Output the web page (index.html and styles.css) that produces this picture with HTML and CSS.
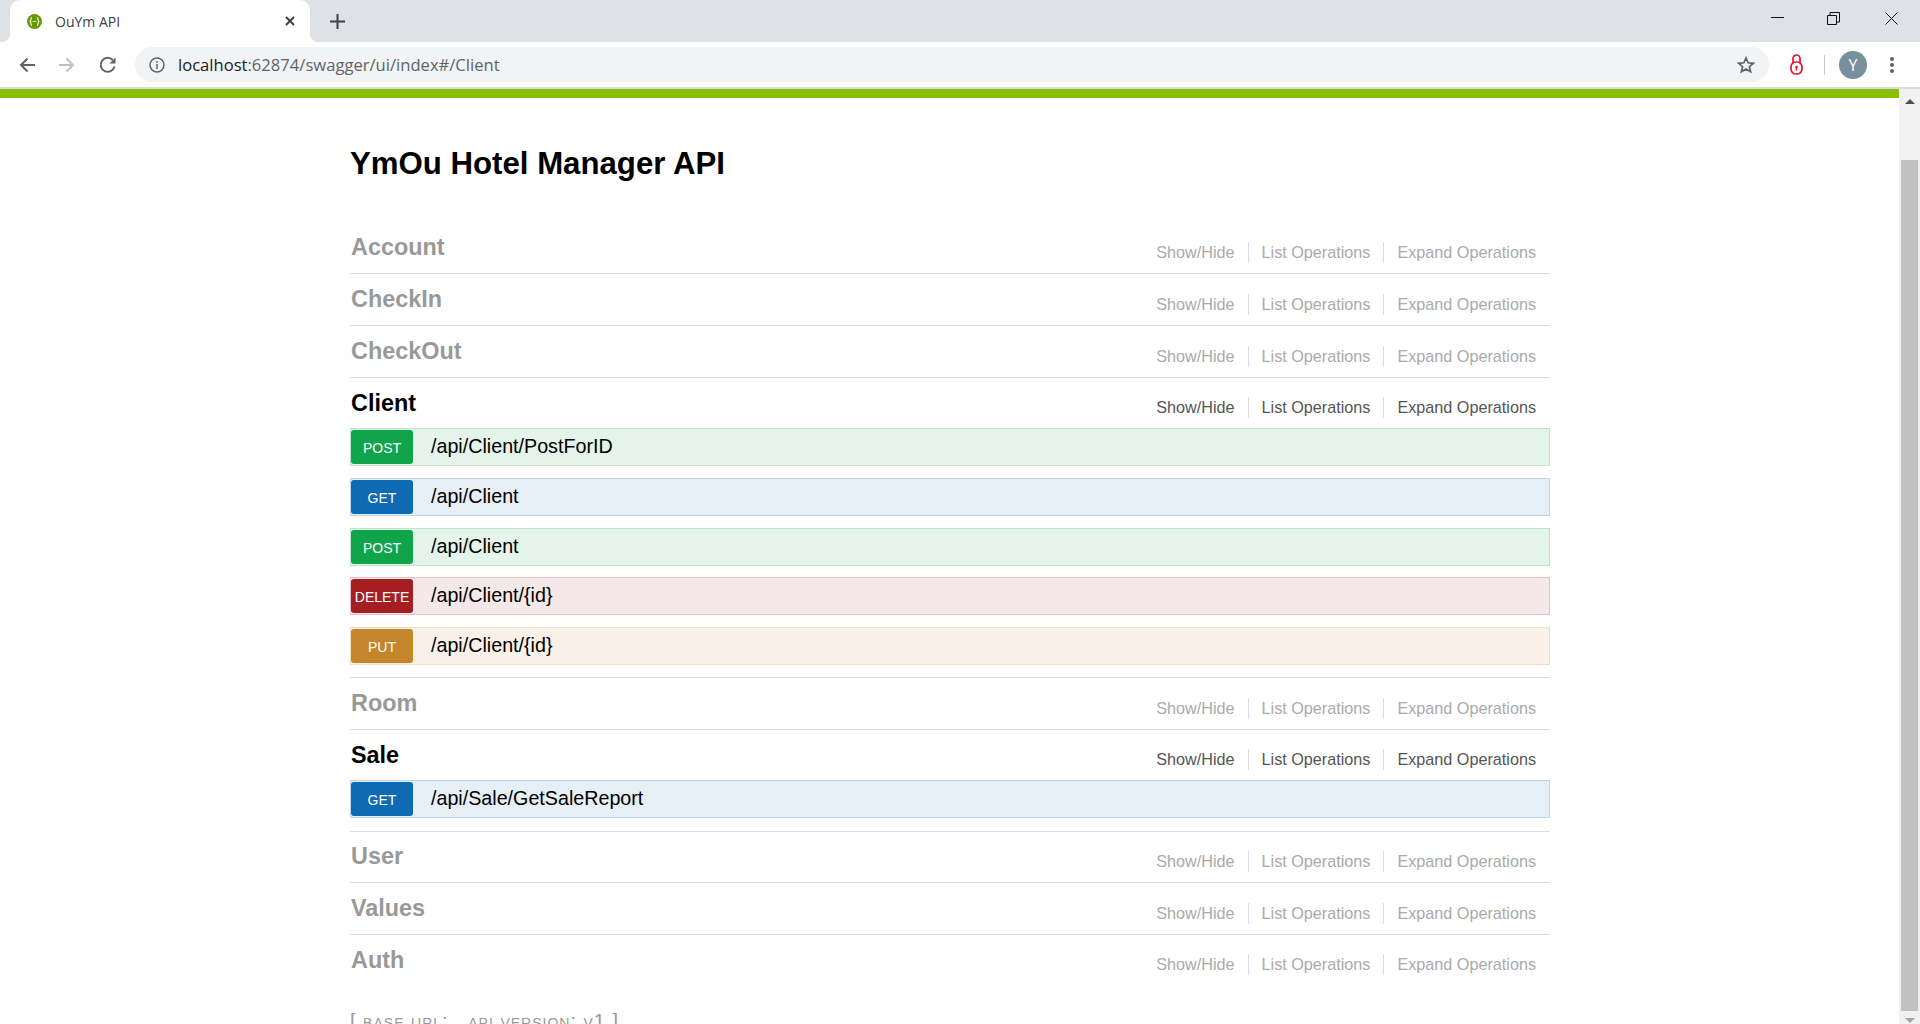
FILE: index.html
```html
<!DOCTYPE html>
<html lang="en">
  <head>
    <meta charset="UTF-8" />
    <title>OuYm API</title>
    <link rel="stylesheet" href="styles.css">
  </head>
  <body>
    <div class="tabstrip">
      <div class="tab">
        <svg class="favicon" width="15" height="15" viewBox="0 0 14 14">
          <circle cx="7" cy="7" r="7" fill="#659a00" />
          <path d="M4.600 3.200c-1.300 0-.5 3.200-1.600 3.800 1.100.6.3 3.800 1.600 3.800M9.400 3.200c1.300 0 .5 3.200 1.600 3.800-1.100.6-.3 3.800-1.600 3.800" fill="none" stroke="#fff" stroke-width="1" />
          <path d="M5.300 7h.9M6.600 7h.8M7.800 7h.9" stroke="#fff" stroke-width="1" />
        </svg>
        <span class="tab-title">OuYm API</span>
        <svg class="tab-close" width="10" height="10" viewBox="0 0 10 10">
          <path d="M1 1l8 8M9 1l-8 8" stroke="#3c4043" stroke-width="2" />
        </svg>
      </div>
      <svg class="new-tab" width="15" height="15" viewBox="0 0 15 15">
        <path d="M7.500 0v15M0 7.500h15" stroke="#3c4043" stroke-width="2" />
      </svg>
      <div class="win-controls">
        <svg width="13" height="13" viewBox="0 0 13 13"><path d="M0 5.500h13" stroke="#111" /></svg>
        <svg width="13" height="13" viewBox="0 0 13 13" fill="none" stroke="#111"><path d="M.5 3.500h9v9h-9zM3 3.500V.5h9.500v9.500h-3" /></svg>
        <svg class="win-close" width="13" height="13" viewBox="0 0 13 13"><path d="M.5.5l12 12M12.500.5l-12 12" stroke="#111" /></svg>
      </div>
    </div>

    <div class="toolbar">
      <svg class="nav-btn" width="16" height="16" viewBox="0 0 16 16" fill="none" stroke="#5f6368" stroke-width="2">
        <path d="M16 8H2M8.500 1.500L2 8l6.500 6.500" />
      </svg>
      <svg class="nav-btn" width="16" height="16" viewBox="0 0 16 16" fill="none" stroke="#bdc1c6" stroke-width="2">
        <path d="M0 8h14M7.500 1.500L14 8l-6.500 6.500" />
      </svg>
      <svg class="nav-btn reload" width="18" height="18" viewBox="0 0 18 18" fill="none" stroke="#5f6368" stroke-width="2">
        <path d="M15.500 10.500A7 7 0 1 1 13.800 4" />
        <path d="M16.500 1.500v6h-6z" fill="#5f6368" stroke="none" />
      </svg>
      <div class="omnibox">
        <svg class="info-icon" width="16" height="16" viewBox="0 0 16 16" fill="none" stroke="#5f6368" stroke-width="1.500">
          <circle cx="8" cy="8" r="7" />
          <path d="M8 7v5M8 4v1.700" />
        </svg>
        <span class="url"><span class="url-host">localhost</span>:62874/swagger/ui/index#/Client</span>
        <svg class="star" width="18" height="18" viewBox="0 0 18 18" fill="none" stroke="#5f6368" stroke-width="1.700">
          <path d="M9 2l2.100 4.800 5.200.5-3.900 3.400 1.200 5.100L9 13.100l-4.600 2.700 1.200-5.100-3.900-3.400 5.200-.5z" />
        </svg>
      </div>
      <svg class="lock" width="13" height="21" viewBox="0 0 13 21" fill="none" stroke="#e8112d" stroke-width="1.700">
        <path d="M3 9V4.500a3.500 3.500 0 0 1 7 0V9" />
        <rect x="1" y="8" width="11" height="12" rx="5" />
        <circle cx="6.500" cy="13" r="1.300" fill="#e8112d" stroke="none" />
        <path d="M6.500 13v3.500" stroke-width="1.500" />
      </svg>
      <div class="toolbar-sep"></div>
      <div class="avatar">Y</div>
      <svg class="kebab" width="4" height="16" viewBox="0 0 4 16" fill="#5f6368">
        <circle cx="2" cy="2" r="2" /><circle cx="2" cy="8" r="2" /><circle cx="2" cy="14" r="2" />
      </svg>
    </div>

    <div class="viewport">
      <div class="page">
        <div class="green-bar"></div>
        <div class="container">
          <h1 class="api-title">YmOu Hotel Manager API</h1>

          <div class="resource">
            <div class="resource-head">
              <h2>Account</h2>
              <ul class="actions"><li>Show/Hide</li><li>List Operations</li><li>Expand Operations</li></ul>
            </div>
          </div>
          <div class="resource">
            <div class="resource-head">
              <h2>CheckIn</h2>
              <ul class="actions"><li>Show/Hide</li><li>List Operations</li><li>Expand Operations</li></ul>
            </div>
          </div>
          <div class="resource">
            <div class="resource-head">
              <h2>CheckOut</h2>
              <ul class="actions"><li>Show/Hide</li><li>List Operations</li><li>Expand Operations</li></ul>
            </div>
          </div>

          <div class="resource open">
            <div class="resource-head">
              <h2>Client</h2>
              <ul class="actions"><li>Show/Hide</li><li>List Operations</li><li>Expand Operations</li></ul>
            </div>
            <div class="operation post"><span class="method">POST</span><span class="path">/api/Client/PostForID</span></div>
            <div class="operation get"><span class="method">GET</span><span class="path">/api/Client</span></div>
            <div class="operation post"><span class="method">POST</span><span class="path">/api/Client</span></div>
            <div class="operation delete"><span class="method">DELETE</span><span class="path">/api/Client/{id}</span></div>
            <div class="operation put"><span class="method">PUT</span><span class="path">/api/Client/{id}</span></div>
          </div>

          <div class="resource">
            <div class="resource-head">
              <h2>Room</h2>
              <ul class="actions"><li>Show/Hide</li><li>List Operations</li><li>Expand Operations</li></ul>
            </div>
          </div>

          <div class="resource open">
            <div class="resource-head">
              <h2>Sale</h2>
              <ul class="actions"><li>Show/Hide</li><li>List Operations</li><li>Expand Operations</li></ul>
            </div>
            <div class="operation get"><span class="method">GET</span><span class="path">/api/Sale/GetSaleReport</span></div>
          </div>

          <div class="resource">
            <div class="resource-head">
              <h2>User</h2>
              <ul class="actions"><li>Show/Hide</li><li>List Operations</li><li>Expand Operations</li></ul>
            </div>
          </div>
          <div class="resource">
            <div class="resource-head">
              <h2>Values</h2>
              <ul class="actions"><li>Show/Hide</li><li>List Operations</li><li>Expand Operations</li></ul>
            </div>
          </div>
          <div class="resource last">
            <div class="resource-head">
              <h2>Auth</h2>
              <ul class="actions"><li>Show/Hide</li><li>List Operations</li><li>Expand Operations</li></ul>
            </div>
          </div>

          <p class="api-info">[ base url: &nbsp; api version: v1 ]</p>
        </div>
      </div>

      <div class="scrollbar">
        <div class="arrow arrow-up"></div>
        <div class="thumb"></div>
        <div class="arrow arrow-down"></div>
      </div>
    </div>
  </body>
</html>
```

FILE: styles.css
```css
* {
  box-sizing: border-box;
}

html,
body {
  margin: 0;
  padding: 0;
  height: 100%;
  overflow: hidden;
}

body {
  display: flex;
  flex-direction: column;
  font-family: "Liberation Sans", Arial, sans-serif;
  background-color: #fff;
}

/* browser chrome */
.tabstrip {
  flex: none;
  height: 42px;
  display: flex;
  align-items: center;
  padding: 0 22px 0 10px;
  background-color: #dee1e6;
}

.tab {
  position: relative;
  width: 300px;
  height: 42px;
  display: flex;
  align-items: center;
  padding: 0 15px 0 17px;
  background-color: #fff;
  border-radius: 10px 10px 0 0;
}

.tab::before,
.tab::after {
  content: "";
  position: absolute;
  bottom: 0;
  width: 9px;
  height: 9px;
}

.tab::before {
  left: -9px;
  background: radial-gradient(circle at 0 0, #dee1e6 9px, #fff 9.5px);
}

.tab::after {
  right: -9px;
  background: radial-gradient(circle at 100% 0, #dee1e6 9px, #fff 9.5px);
}

.favicon {
  flex: none;
}

.tab-title {
  flex: 1;
  margin-left: 13px;
  font-family: "Open Sans", sans-serif;
  font-size: 14px;
  color: #3c4043;
}

.new-tab {
  margin-left: 20px;
}

.win-controls {
  margin-left: auto;
  margin-top: -5px;
  display: flex;
  gap: 43px;
}

.win-close {
  margin-left: 2px;
}

.toolbar {
  flex: none;
  height: 47px;
  display: flex;
  align-items: center;
  padding: 0 26px 0 19px;
  background-color: #fff;
  border-bottom: 2px solid #dadce0;
}

.nav-btn {
  flex: none;
  margin-right: 24px;
}

.nav-btn.reload {
  margin-right: 18px;
}

.omnibox {
  flex: 1;
  height: 35px;
  display: flex;
  align-items: center;
  padding: 0 14px;
  background-color: #f1f3f4;
  border-radius: 18px;
}

.url {
  flex: 1;
  margin-left: 13px;
  font-family: "Open Sans", sans-serif;
  font-size: 16.6px;
  color: #5f6368;
}

.url-host {
  color: #202124;
}

.lock {
  flex: none;
  margin-left: 21px;
}

.toolbar-sep {
  width: 1px;
  height: 20px;
  margin: 0 14px 0 21px;
  background-color: #ccc;
}

.avatar {
  flex: none;
  width: 28px;
  height: 28px;
  display: flex;
  align-items: center;
  justify-content: center;
  border-radius: 50%;
  background-color: #78909c;
  color: #fff;
  font-family: "Open Sans", sans-serif;
  font-size: 16px;
}

.kebab {
  flex: none;
  margin-left: 23px;
}

/* page */
.viewport {
  flex: 1;
  min-height: 0;
  display: flex;
}

.page {
  flex: 1;
  min-width: 0;
  overflow: hidden;
}

.green-bar {
  height: 9px;
  background-color: #89bf04;
}

.container {
  width: 1200px;
  margin-left: 350px;
}

.api-title {
  margin: 0;
  padding-top: 48px;
  height: 124.6px;
  font-size: 31.2px;
  line-height: 36px;
  font-weight: bold;
  color: #000;
}

.resource {
  border-bottom: 1px solid #ddd;
  color: #999;
}

.resource.last {
  border-bottom: none;
}

.resource.open {
  color: #000;
  padding-bottom: 12.3px;
}

.resource-head {
  height: 50.8px;
  display: flex;
  align-items: center;
  justify-content: space-between;
}

.open .resource-head {
  height: 50.4px;
}

.resource-head h2 {
  margin: 0 0 0 1px;
  font-size: 23.4px;
  font-weight: bold;
}

.actions {
  display: flex;
  margin: 9px 1px 0 0;
  padding: 0;
  list-style: none;
  font-size: 16.2px;
  line-height: 21px;
  color: #aaa;
}

.actions li {
  padding: 0 13px;
  border-right: 1px solid #ddd;
}

.actions li:last-child {
  border-right: none;
}

.open .actions {
  color: #555;
}

.operation {
  height: 37.8px;
  display: flex;
  align-items: center;
  margin-bottom: 11.9px;
  padding: 1px 0;
  border: 1px solid;
  color: #000;
}

.operation:last-child {
  margin-bottom: 0;
}

.method {
  flex: none;
  width: 62px;
  height: 100%;
  display: flex;
  align-items: center;
  justify-content: center;
  border-radius: 3px;
  padding-top: 2px;
  color: #fff;
  font-size: 14px;
}

.path {
  margin-left: 18px;
  font-size: 19.7px;
  padding-bottom: 1px;
}

.post {
  background-color: #e4f4ea;
  border-color: #bde5cb;
}

.post .method {
  background-color: #10a54a;
}

.get {
  background-color: #e6eef6;
  border-color: #bcd5ec;
}

.get .method {
  background-color: #0f6ab4;
}

.delete {
  background-color: #f5e8e8;
  border-color: #e8c0c5;
}

.delete .method {
  background-color: #a41e22;
}

.put {
  background-color: #f9f1e7;
  border-color: #f0dcc4;
}

.put .method {
  background-color: #c5862b;
}

.api-info {
  margin: 24px 0 0;
  font-size: 20px;
  font-variant: small-caps;
  letter-spacing: 1px;
  color: #999;
}

/* scrollbar */
.scrollbar {
  flex: none;
  width: 21px;
  display: flex;
  flex-direction: column;
  align-items: center;
  background-color: #f1f1f1;
}

.arrow {
  flex: none;
  width: 0;
  height: 0;
  border-left: 5px solid transparent;
  border-right: 5px solid transparent;
}

.arrow-up {
  margin: 10px 0 56px;
  border-bottom: 5px solid #505050;
}

.arrow-down {
  margin: 7px 0 1px;
  border-top: 5px solid #a3a3a3;
}

.thumb {
  flex: 1;
  width: 17px;
  background-color: #c1c1c1;
}
```
